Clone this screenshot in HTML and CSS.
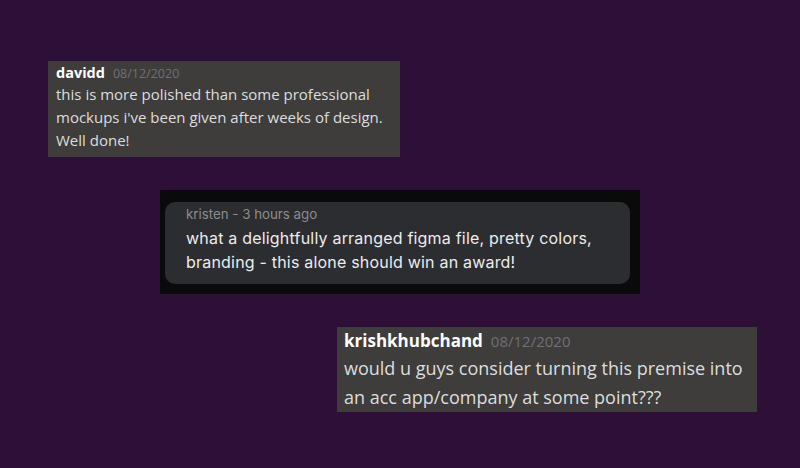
FILE: index.html
```html
<!DOCTYPE html>
<html lang="en">
<head>
    <meta charset="UTF-8">
    <meta name="viewport" content="width=device-width, initial-scale=1.0">
    <title>Comments</title>
    <link rel="stylesheet" href="styles.css">
</head>
<body>
    <!-- Chat style comment -->
    <div class="chat chat-first">
        <div class="chat-head">
            <span class="chat-name">davidd</span>
            <span class="chat-date">08/12/2020</span>
        </div>
        <p class="chat-text">this is more polished than some professional mockups i've been given after weeks of design. Well done!</p>
    </div>

    <!-- Figma style comment -->
    <div class="figma">
        <div class="figma-card">
            <div class="figma-meta">kristen - 3 hours ago</div>
            <p class="figma-text">what a delightfully arranged figma file, pretty colors, branding - this alone should win an award!</p>
        </div>
    </div>

    <div class="chat chat-big">
        <div class="chat-head">
            <span class="chat-name">krishkhubchand</span>
            <span class="chat-date">08/12/2020</span>
        </div>
        <p class="chat-text">would u guys consider turning this premise into an acc app/company at some point???</p>
    </div>
</body>
</html>
```
FILE: styles.css
```css
html, body {
    height: 100%;
}
body {
    margin: 0;
    background-color: #2e0f38;
    font-family: "Open Sans", sans-serif;
    padding-top: 61px;
    box-sizing: border-box;
    display: flex;
    flex-direction: column;
    gap: 33px;
}
.chat {
    background-color: #3e3d3c;
    box-sizing: border-box;
}
.chat-first {
    margin-left: 48px;
    width: 352px;
    height: 96px;
    padding: 2px 8px 0 8px;
}
.chat-head {
    display: flex;
    align-items: baseline;
    gap: 8px;
}
.chat-name {
    color: #ffffff;
    font-weight: 700;
}
.chat-date {
    color: #6f7075;
}
.chat-text {
    margin: 0;
    color: #dcddde;
}
.chat-first .chat-name {
    font-size: 14.5px;
    line-height: 20px;
}
.chat-first .chat-date {
    font-size: 12.5px;
}
.chat-first .chat-text {
    font-size: 15px;
    line-height: 23px;
}
.chat-big {
    margin-left: 337px;
    width: 420px;
    height: 85px;
    padding: 1px 8px 0 7px;
}
.chat-big .chat-name {
    font-size: 17px;
    line-height: 26px;
}
.chat-big .chat-date {
    font-size: 15px;
}
.chat-big .chat-text {
    font-size: 18px;
    line-height: 29px;
}
.figma {
    margin-left: 160px;
    width: 480px;
    height: 104px;
    background-color: #0b0a0b;
    box-sizing: border-box;
    padding: 12px 10px 0 5px;
}
.figma-card {
    background-color: #2c2d30;
    border-radius: 10px;
    height: 82px;
    box-sizing: border-box;
    padding: 3px 20px 0 21px;
}
.figma-meta {
    color: #8c8c8e;
    font-family: Inter, sans-serif;
    font-size: 13.3px;
    line-height: 18px;
}
.figma-text {
    max-width: 420px;
    margin: 3px 0 0 0;
    color: #ececec;
    font-family: Inter, sans-serif;
    font-size: 16px;
    letter-spacing: 0.2px;
    line-height: 24px;
}
```
